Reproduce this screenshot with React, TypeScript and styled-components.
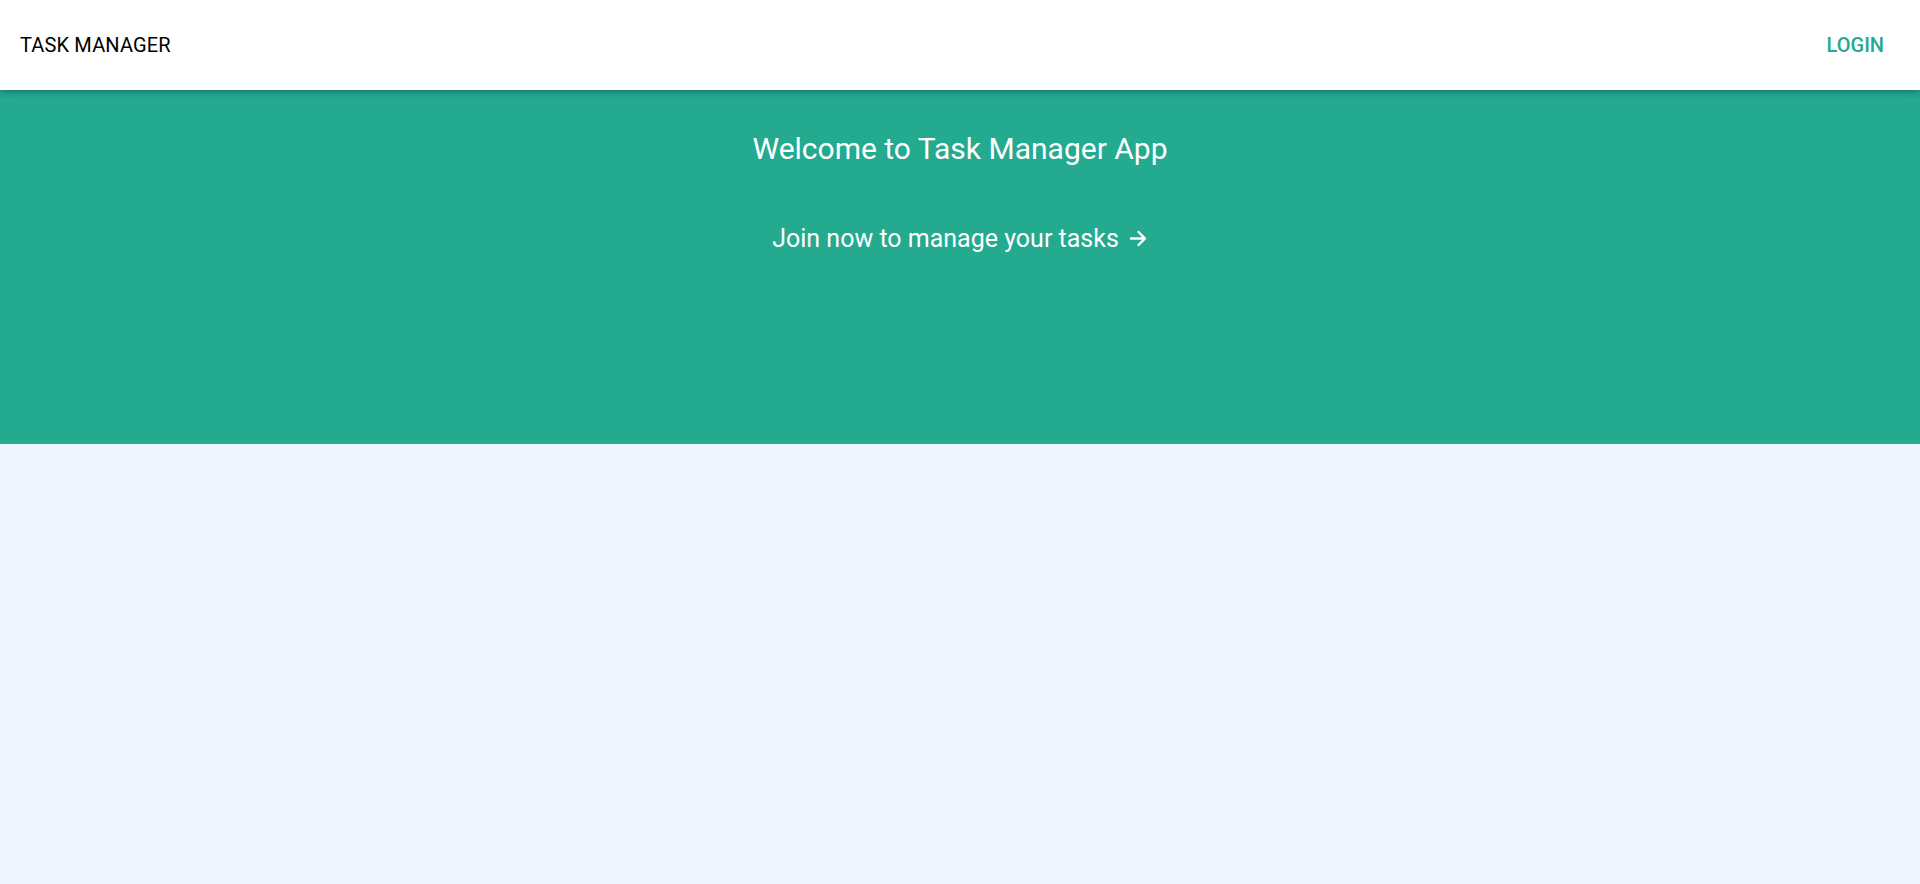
import React from "react";
import styled, { createGlobalStyle } from "styled-components";

const Global = createGlobalStyle`
  html, body { margin: 0; padding: 0; }
  body { background: #eef5ff; font-family: Roboto, "Liberation Sans", sans-serif; }
`;

const Page = styled.div`
  min-height: 884px;
  background: #eef5ff;
`;

const Header = styled.header`
  height: 90px;
  background: #ffffff;
  display: flex;
  align-items: center;
  justify-content: space-between;
  padding: 0 20px;
  box-sizing: border-box;
  position: relative;
  z-index: 1;
  box-shadow: 0 2px 4px -1px rgba(0,0,0,0.14), 0 4px 5px 0 rgba(0,0,0,0.1), 0 1px 10px 0 rgba(0,0,0,0.08);
`;

const Brand = styled.div`
  font-size: 20px;
  font-weight: 400;
  color: #000;
  letter-spacing: 0.15px;
`;

const LoginButton = styled.button`
  background: none;
  border: none;
  font-family: inherit;
  font-size: 20px;
  font-weight: 500;
  color: #23a98e;
  padding: 6px 16px;
  cursor: pointer;
`;

const Hero = styled.section`
  height: 354px;
  background: #23aa8f;
  display: flex;
  flex-direction: column;
  align-items: center;
  color: #fff;
`;

const Title = styled.h1`
  margin: 41px 0 0;
  font-size: 30px;
  font-weight: 400;
  line-height: 1.2;
`;

const JoinLink = styled.a`
  margin-top: 57px;
  font-size: 25px;
  color: #fff;
  text-decoration: none;
  display: flex;
  align-items: center;
  gap: 10px;
`;

export default function App() {
  return (
    <Page>
      <Global />
      <Header>
        <Brand>TASK MANAGER</Brand>
        <LoginButton>LOGIN</LoginButton>
      </Header>
      <Hero>
        <Title>Welcome to Task Manager App</Title>
        <JoinLink href="#">
          Join now to manage your tasks
          <svg width="19" height="19" viewBox="0 0 19 19" fill="none" stroke="#fff" strokeWidth="2.4" strokeLinecap="round" strokeLinejoin="round">
            <path d="M2 9.5h14M9.5 3l6.5 6.5-6.5 6.5" />
          </svg>
        </JoinLink>
      </Hero>
    </Page>
  );
}
